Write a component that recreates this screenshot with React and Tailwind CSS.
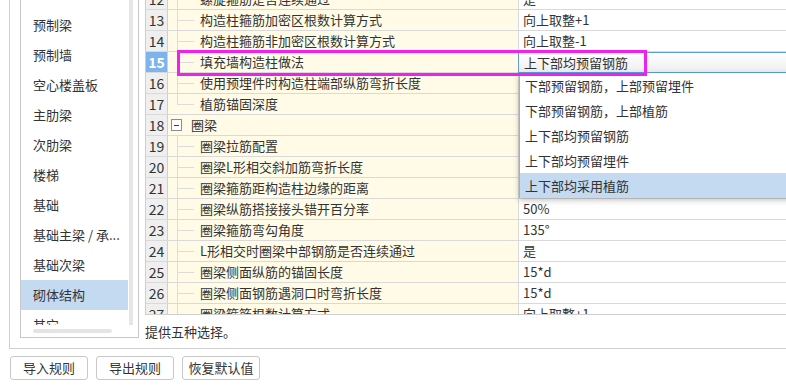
import React from "react";

const FONT = { fontFamily: '"Noto Sans CJK SC", "Noto Sans", sans-serif' };

const categories = [
  "预制梁",
  "预制墙",
  "空心楼盖板",
  "主肋梁",
  "次肋梁",
  "楼梯",
  "基础",
  "基础主梁 / 承...",
  "基础次梁",
  "砌体结构",
  "其它",
];

// kind: child / last / group
const rows = [
  { no: 12, name: "螺旋箍筋是否连续通过", value: "是", kind: "child" },
  { no: 13, name: "构造柱箍筋加密区根数计算方式", value: "向上取整+1", kind: "child" },
  { no: 14, name: "构造柱箍筋非加密区根数计算方式", value: "向上取整-1", kind: "child" },
  { no: 15, name: "填充墙构造柱做法", value: "", kind: "child", active: true },
  { no: 16, name: "使用预埋件时构造柱端部纵筋弯折长度", value: "", kind: "child" },
  { no: 17, name: "植筋锚固深度", value: "", kind: "last" },
  { no: 18, name: "圈梁", value: "", kind: "group" },
  { no: 19, name: "圈梁拉筋配置", value: "", kind: "child" },
  { no: 20, name: "圈梁L形相交斜加筋弯折长度", value: "", kind: "child" },
  { no: 21, name: "圈梁箍筋距构造柱边缘的距离", value: "", kind: "child" },
  { no: 22, name: "圈梁纵筋搭接接头错开百分率", value: "50%", kind: "child" },
  { no: 23, name: "圈梁箍筋弯勾角度", value: "135°", kind: "child" },
  { no: 24, name: "L形相交时圈梁中部钢筋是否连续通过", value: "是", kind: "child" },
  { no: 25, name: "圈梁侧面纵筋的锚固长度", value: "15*d", kind: "child" },
  { no: 26, name: "圈梁侧面钢筋遇洞口时弯折长度", value: "15*d", kind: "child" },
  { no: 27, name: "圈梁箍筋根数计算方式", value: "向上取整+1", kind: "child" },
];

const options = [
  "下部预留钢筋，上部预留埋件",
  "下部预留钢筋，上部植筋",
  "上下部均预留钢筋",
  "上下部均预留埋件",
  "上下部均采用植筋",
];

const TreeCell = ({ row }) => {
  if (row.kind === "group") {
    return (
      <div className="flex items-center h-full pl-[3px]">
        <span className="w-[11px] h-[12px] border border-[#8c8c8c] bg-white flex items-center justify-center">
          <span className="w-[5px] h-px bg-[#444]" />
        </span>
        <span className="ml-[9px]">{row.name}</span>
      </div>
    );
  }
  return (
    <div className="flex h-full">
      <div className="w-[9px] shrink-0" />
      <div className="relative w-[17px] shrink-0">
        <div
          className={`absolute left-0 top-0 w-px bg-[#dcdcdc] ${
            row.kind === "last" ? "h-[11px]" : "h-[21px]"
          }`}
        />
        <div className="absolute left-0 top-[10px] w-[17px] h-px bg-[#dcdcdc]" />
      </div>
      <span className="ml-[6px] leading-[20px]">{row.name}</span>
    </div>
  );
};

const GridRow = ({ row }) => (
  <div className="flex h-[21px] border-b border-[#d9d9d9]">
    <div
      className={`w-[22px] shrink-0 flex items-center justify-center border-r border-[#d0d0d0] text-[14px] ${
        row.active ? "bg-[#7db4ec] text-white font-bold" : "bg-[#efefef] text-[#333]"
      }`}
    >
      {row.no}
    </div>
    <div className="w-[351px] shrink-0 bg-[#fffbe6] border-r border-[#d9d9d9]">
      <TreeCell row={row} />
    </div>
    <div className="flex-1 bg-white pl-[4px] leading-[20px]">{row.value}</div>
  </div>
);

export default function App() {
  return (
    <div
      className="relative w-[786px] h-[387px] overflow-hidden bg-white text-[13px] text-[#333]"
      style={FONT}
    >
      <div className="ml-[9px] h-[349px] border-l border-b border-[#cfcfcf] flex">
        {/* 分类列表 */}
        <div className="ml-[10px] w-[119px] h-[338px] border-x border-b border-[#c8c8c8] flex flex-col">
          <div className="flex flex-1 overflow-hidden">
            <div className="w-[107px] pt-[10px] overflow-hidden">
              {categories.map((c) => (
                <div
                  key={c}
                  className={`h-[30px] pl-[12px] flex items-center whitespace-nowrap ${
                    c === "砌体结构" ? "bg-[#c4daf1]" : ""
                  }`}
                >
                  {c}
                </div>
              ))}
            </div>
            <div className="ml-[1px] w-[4px] bg-[#e6e6e6]" />
          </div>
          <div className="h-[12px] flex items-center pl-[12px]">
            <div className="w-[79px] h-[4px] rounded-full bg-[#e4e4e4]" />
          </div>
        </div>

        {/* 规则表格 */}
        <div className="ml-[6px] flex-1 flex flex-col">
          <div className="h-[315px] overflow-hidden border-l border-b border-[#cfcfcf]">
            <div className="-mt-[11px]">
              {rows.map((r) => (
                <GridRow key={r.no} row={r} />
              ))}
            </div>
          </div>
          <div className="h-[33px] flex items-center">提供五种选择。</div>
        </div>
      </div>

      {/* 底部按钮 */}
      <div className="flex gap-[8px] ml-[10px] mt-[7px]">
        {["导入规则", "导出规则", "恢复默认值"].map((b) => (
          <button
            key={b}
            className="w-[78px] h-[24px] border border-[#c9c9c9] rounded-[3px] bg-white text-[13px] text-[#333]"
          >
            {b}
          </button>
        ))}
      </div>

      {/* 下拉框 */}
      <div className="absolute left-[518px] top-[52px] w-[280px] h-[21px] border border-[#5b9fdb] bg-gradient-to-b from-white to-[#eeeeee] pl-[5px] leading-[19px]">
        上下部均预留钢筋
      </div>
      <div className="absolute left-[519px] top-[73px] w-[280px] h-[125px] bg-white border-l border-b border-[#8fb4d8] shadow-[0_2px_6px_rgba(0,0,0,0.25)]">
        {options.map((o, i) => (
          <div
            key={o}
            className={`h-[25px] pl-[5px] flex items-center ${
              i === options.length - 1 ? "bg-[#c4daf1]" : ""
            }`}
          >
            {o}
          </div>
        ))}
      </div>

      {/* 高亮框 */}
      <div className="absolute left-[177px] top-[50px] w-[470px] h-[26px] border-[3px] border-[#f020f0]" />
    </div>
  );
}
